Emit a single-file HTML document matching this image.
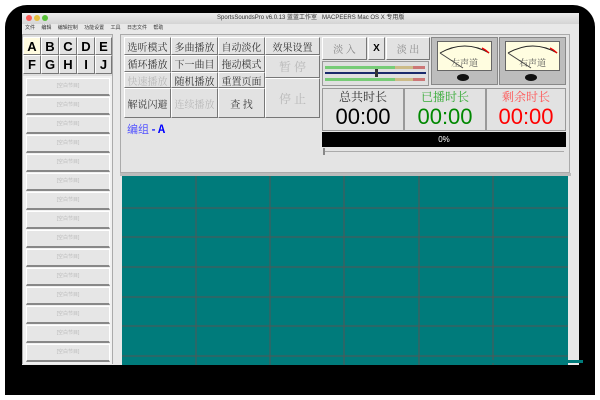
<!DOCTYPE html>
<html><head><meta charset="utf-8"><style>
*{margin:0;padding:0;box-sizing:border-box}
body{width:600px;height:400px;background:#fff;position:relative;overflow:hidden;font-family:"Liberation Sans","Noto Sans CJK SC",sans-serif}
.a{position:absolute}
.btn{position:absolute;background:#e2e2e2;border:1px solid #fff;border-right-color:#777;border-bottom-color:#777;display:flex;align-items:center;justify-content:center;font-family:"Noto Serif CJK SC","Liberation Serif",serif;font-size:10px;color:#333;white-space:nowrap}
.dis{color:#b8b8b8}
.let{font-family:"Liberation Sans",sans-serif;font-weight:bold;font-size:13px;color:#000}
.lb{position:absolute;left:26px;width:84px;height:18px;background:#e6e6e6;border:1px solid #fff;border-bottom:2px solid #888;font-size:5px;color:#bbb;text-align:center;line-height:15px}
.tp{position:absolute;top:88px;height:43px;background:#e2e2e2;border:1px solid #999;text-align:center;font-family:"Noto Serif CJK SC",serif;font-size:12px;line-height:16px}
.tp b{display:block;font-family:"Liberation Sans",sans-serif;font-weight:normal;font-size:22px;line-height:24px}
</style></head><body>
<div class="a" style="left:5px;top:5px;width:590px;height:390px;background:#000;border-radius:22px"></div>
<div class="a" style="left:22px;top:13px;width:557px;height:352px;background:#e8e8e8"></div>
<div class="a" style="left:22px;top:13px;width:557px;height:11px;background:linear-gradient(#ececec,#d4d4d4);font-size:6px;color:#333;line-height:11px;padding-left:195px">SportsSoundsPro v6.0.13 蓝蓝工作室 &nbsp; MACPEERS Mac OS X 专用版</div>
<div class="a" style="left:26px;top:15px;width:6px;height:6px;border-radius:50%;background:#fc5b57"></div>
<div class="a" style="left:34px;top:15px;width:6px;height:6px;border-radius:50%;background:#e5bf3c"></div>
<div class="a" style="left:42px;top:15px;width:6px;height:6px;border-radius:50%;background:#57c038"></div>
<div class="a" style="left:22px;top:24px;width:557px;height:8px;background:#e8e8e8;font-size:5px;color:#333;line-height:8px;padding-left:3px;word-spacing:5px">文件 编辑 编辑控制 功能设置 工具 日志文件 帮助</div>
<div class="a" style="left:22px;top:34px;width:91px;height:330px;background:#dedede;border:1px solid #aaa"></div>
<div class="btn let" style="left:23px;top:37px;width:18px;height:18px;background:#fffbe0">A</div>
<div class="btn let" style="left:41px;top:37px;width:18px;height:18px">B</div>
<div class="btn let" style="left:59px;top:37px;width:18px;height:18px">C</div>
<div class="btn let" style="left:77px;top:37px;width:18px;height:18px">D</div>
<div class="btn let" style="left:95px;top:37px;width:17px;height:18px">E</div>
<div class="btn let" style="left:23px;top:55px;width:18px;height:19px">F</div>
<div class="btn let" style="left:41px;top:55px;width:18px;height:19px">G</div>
<div class="btn let" style="left:59px;top:55px;width:18px;height:19px">H</div>
<div class="btn let" style="left:77px;top:55px;width:18px;height:19px">I</div>
<div class="btn let" style="left:95px;top:55px;width:17px;height:19px">J</div>
<div class="a" style="left:23px;top:76px;width:89px;height:288px;background:#f0f0f0"></div>
<div class="lb" style="top:78px">[空白节目]</div>
<div class="lb" style="top:97px">[空白节目]</div>
<div class="lb" style="top:116px">[空白节目]</div>
<div class="lb" style="top:135px">[空白节目]</div>
<div class="lb" style="top:154px">[空白节目]</div>
<div class="lb" style="top:173px">[空白节目]</div>
<div class="lb" style="top:192px">[空白节目]</div>
<div class="lb" style="top:211px">[空白节目]</div>
<div class="lb" style="top:230px">[空白节目]</div>
<div class="lb" style="top:249px">[空白节目]</div>
<div class="lb" style="top:268px">[空白节目]</div>
<div class="lb" style="top:287px">[空白节目]</div>
<div class="lb" style="top:306px">[空白节目]</div>
<div class="lb" style="top:325px">[空白节目]</div>
<div class="lb" style="top:344px">[空白节目]</div>
<div class="a" style="left:120px;top:34px;width:450px;height:139px;background:#e4e4e4;border:1px solid #aaa"></div>
<div class="btn" style="left:124px;top:37px;width:47px;height:18px">选听模式</div>
<div class="btn" style="left:171px;top:37px;width:47px;height:18px">多曲播放</div>
<div class="btn" style="left:218px;top:37px;width:47px;height:18px">自动淡化</div>
<div class="btn" style="left:265px;top:37px;width:55px;height:18px">效果设置</div>
<div class="btn" style="left:124px;top:55px;width:47px;height:17px">循环播放</div>
<div class="btn" style="left:171px;top:55px;width:47px;height:17px">下一曲目</div>
<div class="btn" style="left:218px;top:55px;width:47px;height:17px">拖动模式</div>
<div class="btn dis" style="left:265px;top:55px;width:55px;height:23px;font-size:12px">暂 停</div>
<div class="btn dis" style="left:124px;top:72px;width:47px;height:16px">快速播放</div>
<div class="btn" style="left:171px;top:72px;width:47px;height:16px">随机播放</div>
<div class="btn" style="left:218px;top:72px;width:47px;height:16px">重置页面</div>
<div class="btn dis" style="left:265px;top:78px;width:55px;height:40px;font-size:12px">停 止</div>
<div class="btn" style="left:124px;top:88px;width:47px;height:30px">解说闪避</div>
<div class="btn dis" style="left:171px;top:88px;width:47px;height:30px">连续播放</div>
<div class="btn" style="left:218px;top:88px;width:47px;height:30px">查 找</div>
<div class="a" style="left:127px;top:121px;font-size:11px;color:#55f;font-family:'Noto Sans CJK SC',sans-serif">编组 <b style="color:#00f">- A</b></div>
<div class="btn dis" style="left:322px;top:37px;width:45px;height:23px;color:#888">淡 入</div>
<div class="btn let" style="left:368px;top:37px;width:17px;height:23px;font-size:10px">X</div>
<div class="btn dis" style="left:386px;top:37px;width:44px;height:23px;color:#888">淡 出</div>
<div class="a" style="left:322px;top:61px;width:107px;height:25px;background:#e0e0e0;border:1px solid #999">
<div class="a" style="left:2px;top:4px;width:100px;height:3px;background:linear-gradient(90deg,#7c7 0 70%,#cb8 70% 88%,#c77 88%)"></div>
<div class="a" style="left:2px;top:10px;width:101px;height:2px;background:#1a2a6c"></div>
<div class="a" style="left:52px;top:7px;width:3px;height:8px;background:#333"></div>
<div class="a" style="left:2px;top:16px;width:100px;height:3px;background:linear-gradient(90deg,#7c7 0 70%,#cb8 70% 88%,#c77 88%)"></div>
</div>
<div class="a" style="left:431px;top:37px;width:67px;height:48px;background:#bdbdbd;border:1px solid #888">
<div class="a" style="left:5px;top:3px;width:55px;height:30px;background:#fffde0;border:1px solid #666;font-size:9px;color:#555;text-align:center;padding-top:14px;font-family:'Noto Serif CJK SC',serif">左声道</div>
<svg class="a" style="left:5px;top:3px" width="56" height="30"><path d="M3 12 Q28 -2 52 12" fill="none" stroke="#222" stroke-width="1"/><path d="M45 7 Q49 9 52 12" fill="none" stroke="#e00" stroke-width="1.5"/><path d="M3 12 L26 27" stroke="#444"/></svg>
<div class="a" style="left:25px;top:36px;width:12px;height:7px;border-radius:50%;background:#111"></div></div>
<div class="a" style="left:499px;top:37px;width:67px;height:48px;background:#bdbdbd;border:1px solid #888">
<div class="a" style="left:5px;top:3px;width:55px;height:30px;background:#fffde0;border:1px solid #666;font-size:9px;color:#555;text-align:center;padding-top:14px;font-family:'Noto Serif CJK SC',serif">右声道</div>
<svg class="a" style="left:5px;top:3px" width="56" height="30"><path d="M3 12 Q28 -2 52 12" fill="none" stroke="#222" stroke-width="1"/><path d="M45 7 Q49 9 52 12" fill="none" stroke="#e00" stroke-width="1.5"/><path d="M3 12 L26 27" stroke="#444"/></svg>
<div class="a" style="left:25px;top:36px;width:12px;height:7px;border-radius:50%;background:#111"></div></div>
<div class="tp" style="left:322px;width:82px;color:#333">总共时长<b style="color:#000">00:00</b></div>
<div class="tp" style="left:404px;width:82px;color:#3a3">已播时长<b style="color:#080">00:00</b></div>
<div class="tp" style="left:486px;width:80px;color:#f55">剩余时长<b style="color:#f00">00:00</b></div>
<div class="a" style="left:322px;top:132px;width:244px;height:15px;background:#000;color:#fff;font-size:8px;text-align:center;line-height:15px">0%</div>
<div class="a" style="left:324px;top:151px;width:240px;height:1px;background:#aaa"></div>
<div class="a" style="left:323px;top:148px;width:2px;height:7px;background:#888"></div>
<div class="a" style="left:120px;top:173px;width:451px;height:3px;background:#bbb"></div>
<svg class="a" style="left:122px;top:176px" width="446" height="190">
<rect width="446" height="190" fill="#007b7b"/>
<g stroke="#555" stroke-width="1">
<path d="M74 0V190M148 0V190M222 0V190M297 0V190M371 0V190"/>
<path d="M0 32H446M0 61H446M0 91H446M0 121H446M0 150H446M0 180H446"/>
</g></svg>
<div class="a" style="left:0;top:365px;width:600px;height:30px;background:#000"></div>
<div class="a" style="left:0;top:365px;width:5px;height:35px;background:#fff"></div>
<div class="a" style="left:595px;top:365px;width:5px;height:35px;background:#fff"></div>
<div class="a" style="left:0;top:395px;width:600px;height:5px;background:#fff"></div>
<div class="a" style="left:5px;top:365px;width:590px;height:30px;background:#000;border-radius:0 0 22px 22px"></div>
<div class="a" style="left:453px;top:360px;width:130px;height:3px;background:#007b7b"></div>
</body></html>
